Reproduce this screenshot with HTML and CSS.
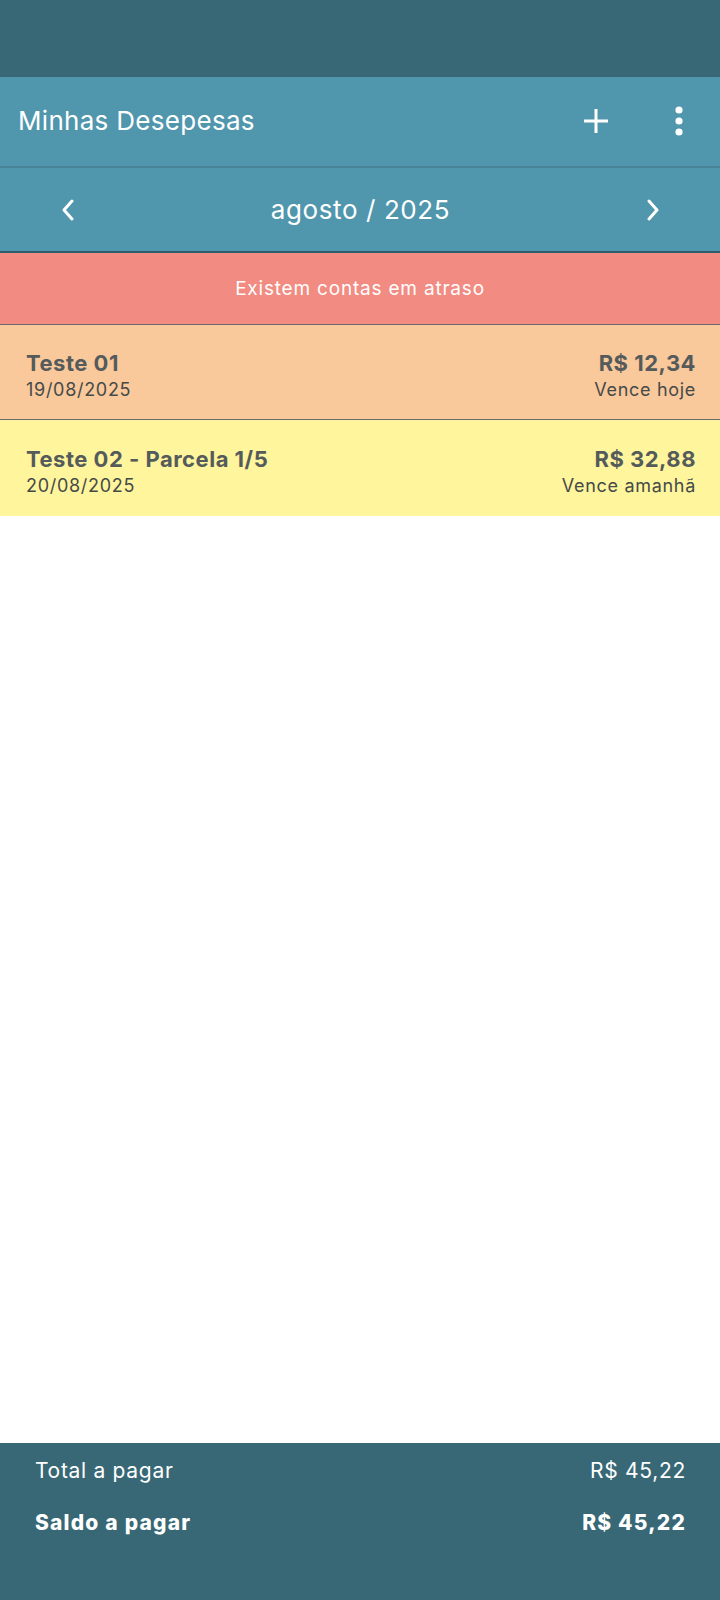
FILE: index.html
```html
<!DOCTYPE html>
<html>

<head lang="pt">
    <meta charset="utf-8" />
    <meta name="viewport" content="width=device-width, initial-scale=1" />
    <title>Minhas Desepesas</title>
    <link rel="stylesheet" href="styles.css">
</head>

<body>
    <div class="status-bar"></div>

    <header class="toolbar">
        <h1 class="title">Minhas Desepesas</h1>
        <div class="actions">
            <svg class="icon-add" width="28" height="28" viewBox="0 0 28 28">
                <path d="M14 2v24M2 14h24" stroke="#fff" stroke-width="3" fill="none" />
            </svg>
            <svg class="icon-more" width="10" height="30" viewBox="0 0 10 30">
                <circle cx="5" cy="4" r="3.6" fill="#fff" />
                <circle cx="5" cy="15" r="3.6" fill="#fff" />
                <circle cx="5" cy="26" r="3.6" fill="#fff" />
            </svg>
        </div>
    </header>

    <div class="month-bar">
        <svg class="chevron" width="14" height="22" viewBox="0 0 14 22">
            <path d="M11 2L3 11l8 9" stroke="#fff" stroke-width="3" fill="none" stroke-linecap="round" stroke-linejoin="round" />
        </svg>
        <span class="month">agosto / 2025</span>
        <svg class="chevron" width="14" height="22" viewBox="0 0 14 22">
            <path d="M3 2l8 9-8 9" stroke="#fff" stroke-width="3" fill="none" stroke-linecap="round" stroke-linejoin="round" />
        </svg>
    </div>

    <div class="alert">Existem contas em atraso</div>

    <ul class="bills">
        <li class="bill today">
            <div class="bill-left">
                <span class="bill-name">Teste 01</span>
                <span class="bill-date">19/08/2025</span>
            </div>
            <div class="bill-right">
                <span class="bill-value">R$ 12,34</span>
                <span class="bill-due">Vence hoje</span>
            </div>
        </li>
        <li class="bill tomorrow">
            <div class="bill-left">
                <span class="bill-name">Teste 02 - Parcela 1/5</span>
                <span class="bill-date">20/08/2025</span>
            </div>
            <div class="bill-right">
                <span class="bill-value">R$ 32,88</span>
                <span class="bill-due">Vence amanhã</span>
            </div>
        </li>
    </ul>

    <footer class="totals">
        <div class="total-row">
            <span>Total a pagar</span>
            <span>R$ 45,22</span>
        </div>
        <div class="total-row strong">
            <span>Saldo a pagar</span>
            <span>R$ 45,22</span>
        </div>
    </footer>
</body>

</html>
```

FILE: styles.css
```css
* {
    box-sizing: border-box;
}

body {
    margin: 0;
    width: 720px;
    height: 1600px;
    display: flex;
    flex-direction: column;
    background-color: #fff;
    font-family: "Inter", "Noto Sans", sans-serif;
    overflow: hidden;
}

.status-bar {
    height: 77px;
    flex-shrink: 0;
    background-color: #386876;
}

.toolbar {
    height: 91px;
    flex-shrink: 0;
    background-color: #5096ad;
    display: flex;
    align-items: center;
    justify-content: space-between;
    padding: 0 0 2px 18px;
    border-bottom: 2px solid #4a8499;
}

.title {
    margin: 0;
    color: #fff;
    font-size: 26px;
    font-weight: 400;
    letter-spacing: 0.3px;
}

.actions {
    display: flex;
    align-items: center;
}

.icon-add {
    margin-right: 64px;
}

.icon-more {
    margin-right: 36px;
}

.month-bar {
    height: 85px;
    flex-shrink: 0;
    background-color: #5096ad;
    display: flex;
    align-items: center;
    justify-content: space-between;
    padding: 0 60px 0 61px;
    border-bottom: 2px solid #2f5c6a;
    box-shadow: 0 1px 2px rgba(0, 0, 0, 0.15);
}

.month {
    color: #fff;
    font-size: 26px;
    letter-spacing: 0.6px;
}

.alert {
    height: 72px;
    flex-shrink: 0;
    background-color: #f28b82;
    color: #fff;
    font-size: 19px;
    letter-spacing: 0.8px;
    display: flex;
    align-items: center;
    justify-content: center;
    border-bottom: 1px solid #6b6b6b;
}

.bills {
    list-style: none;
    margin: 0;
    padding: 0;
    flex: 1;
}

.bill {
    height: 95px;
    display: flex;
    justify-content: space-between;
    align-items: center;
    padding: 8px 24px 0 26px;
    color: #555b5a;
}

.bill.today {
    background-color: #f9c89b;
    border-bottom: 1px solid #6b6b6b;
}

.bill.tomorrow {
    background-color: #fff59d;
    height: 96px;
}

.bill-left,
.bill-right {
    display: flex;
    flex-direction: column;
}

.bill-right {
    align-items: flex-end;
}

.bill-name,
.bill-value {
    font-size: 22px;
    font-weight: 700;
    letter-spacing: 0.5px;
    line-height: 28px;
}

.bill-date,
.bill-due {
    font-size: 18px;
    color: #454a49;
    letter-spacing: 0.7px;
    line-height: 26px;
}

.totals {
    height: 157px;
    flex-shrink: 0;
    background-color: #386876;
    padding: 10px 34px 0 35px;
    color: #fff;
}

.total-row {
    display: flex;
    justify-content: space-between;
    font-size: 21px;
    letter-spacing: 0.7px;
    height: 34px;
    align-items: center;
}

.total-row.strong {
    font-weight: 800;
    letter-spacing: 1.2px;
    margin-top: 18px;
}
```
